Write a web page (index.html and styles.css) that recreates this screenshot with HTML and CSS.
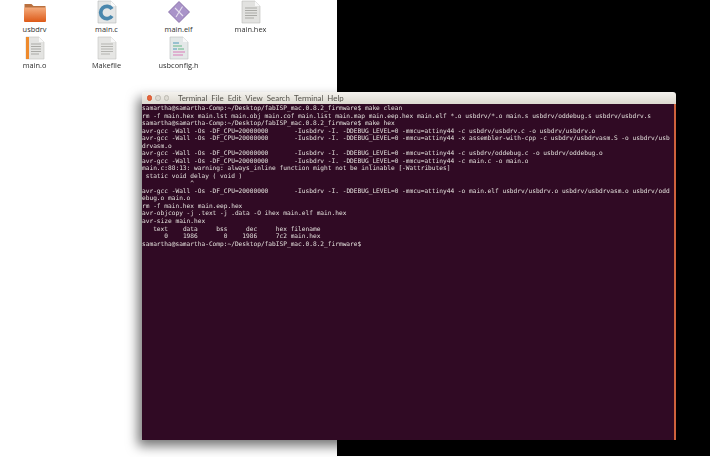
FILE: index.html
```html
<!DOCTYPE html>
<html lang="en">
<head>
<meta charset="utf-8">
<title>Terminal</title>
<link rel="stylesheet" href="styles.css">
</head>
<body>
<div class="desktop">
  <div class="files">
    <div class="file">
      <svg class="icon" viewBox="0 0 24 24"><defs><linearGradient id="fold" x1="0" y1="0" x2="0" y2="1"><stop offset="0" stop-color="#f4ab7c"/><stop offset="1" stop-color="#dd5a18"/></linearGradient></defs><path d="M1.500 4h7l2 2h12v3h-21z" fill="#b9703f"/><rect x="1" y="7.500" width="22" height="14.500" rx="1" fill="url(#fold)"/></svg>
      <span class="name">usbdrv</span>
    </div>
    <div class="file">
      <svg class="icon" viewBox="0 0 24 24"><path d="M3 1h13l5 5v17H3z" fill="#e4e6e6" stroke="#b5b9ba" stroke-width=".6"/><path d="M16 1v5h5z" fill="#fafafa"/><path d="M17 9A6.200 6.200 0 1 0 17 16" fill="none" stroke="#4a87ad" stroke-width="3.800"/></svg>
      <span class="name">main.c</span>
    </div>
    <div class="file">
      <svg class="icon" viewBox="0 0 24 24"><path d="M12 1.500L22.500 12 12 22.500 1.500 12z" fill="#a993c9" stroke="#7d659f" stroke-width=".8"/><path d="M15.500 6.500L9 17M8 8l8 8" stroke="#e6e0ee" stroke-width="1.100" fill="none"/></svg>
      <span class="name">main.elf</span>
    </div>
    <div class="file">
      <svg class="icon" viewBox="0 0 24 24"><path d="M3 1h13l5 5v17H3z" fill="#e2e2e0" stroke="#bcbcba" stroke-width=".6"/><path d="M16 1v5h5z" fill="#f8f8f8"/><path d="M6 8h12M6 10.500h12M6 13h12M6 15.500h12M6 18h9" stroke="#aaaaa6" stroke-width="1.100"/></svg>
      <span class="name">main.hex</span>
    </div>
    <div class="file">
      <svg class="icon" viewBox="0 0 24 24"><path d="M3 1h13l5 5v17H3z" fill="#e4e4e2" stroke="#c2c2c0" stroke-width=".6"/><rect x="3" y="1" width="3" height="22" fill="#ee8a2c"/><path d="M16 1v5h5z" fill="#f8f8f8"/><path d="M8 8h10M8 10.500h10M8 13h10M8 15.500h10M8 18h8" stroke="#aaaaa6" stroke-width="1.100"/></svg>
      <span class="name">main.o</span>
    </div>
    <div class="file">
      <svg class="icon" viewBox="0 0 24 24"><path d="M3 1h13l5 5v17H3z" fill="#e6e6e4" stroke="#c2c2c0" stroke-width=".6"/><path d="M16 1v5h5z" fill="#f8f8f8"/><path d="M6 8h12M6 10.500h12M6 13h12M6 15.500h12M6 18h9" stroke="#b4b4b0" stroke-width="1.100"/></svg>
      <span class="name">Makefile</span>
    </div>
    <div class="file">
      <svg class="icon" viewBox="0 0 24 24"><path d="M3 1h13l5 5v17H3z" fill="#e4e8e8" stroke="#b8bcbc" stroke-width=".6"/><path d="M16 1v5h5z" fill="#f8f8f8"/><path d="M6 7h6M6 13h4" stroke="#7fb2c8" stroke-width="1.300"/><path d="M6 10h9M11 13h6" stroke="#8fc6a8" stroke-width="1.300"/><path d="M6 16h12M6 19h10" stroke="#dd9ec8" stroke-width="1.300"/></svg>
      <span class="name">usbconfig.h</span>
    </div>
  </div>
  <div class="black"></div>
  <section class="window">
    <header class="titlebar">
      <div class="buttons">
        <span class="btn close"></span>
        <span class="btn min"></span>
        <span class="btn max"></span>
      </div>
      <nav class="menu">
        <span>Terminal</span><span>File</span><span>Edit</span><span>View</span><span>Search</span><span>Terminal</span><span>Help</span>
      </nav>
    </header>
    <pre class="term">samartha@samartha-Comp:~/Desktop/fabISP_mac.0.8.2_firmware$ make clean
rm -f main.hex main.lst main.obj main.cof main.list main.map main.eep.hex main.elf *.o usbdrv/*.o main.s usbdrv/oddebug.s usbdrv/usbdrv.s
samartha@samartha-Comp:~/Desktop/fabISP_mac.0.8.2_firmware$ make hex
avr-gcc -Wall -Os -DF_CPU=20000000	 -Iusbdrv -I. -DDEBUG_LEVEL=0 -mmcu=attiny44 -c usbdrv/usbdrv.c -o usbdrv/usbdrv.o
avr-gcc -Wall -Os -DF_CPU=20000000	 -Iusbdrv -I. -DDEBUG_LEVEL=0 -mmcu=attiny44 -x assembler-with-cpp -c usbdrv/usbdrvasm.S -o usbdrv/usb
drvasm.o
avr-gcc -Wall -Os -DF_CPU=20000000	 -Iusbdrv -I. -DDEBUG_LEVEL=0 -mmcu=attiny44 -c usbdrv/oddebug.c -o usbdrv/oddebug.o
avr-gcc -Wall -Os -DF_CPU=20000000	 -Iusbdrv -I. -DDEBUG_LEVEL=0 -mmcu=attiny44 -c main.c -o main.o
main.c:88:13: warning: always_inline function might not be inlinable [-Wattributes]
 static void delay ( void )
             ^
avr-gcc -Wall -Os -DF_CPU=20000000	 -Iusbdrv -I. -DDEBUG_LEVEL=0 -mmcu=attiny44 -o main.elf usbdrv/usbdrv.o usbdrv/usbdrvasm.o usbdrv/odd
ebug.o main.o
rm -f main.hex main.eep.hex
avr-objcopy -j .text -j .data -O ihex main.elf main.hex
avr-size main.hex
   text	   data	    bss	    dec	    hex	filename
      0	   1986	      0	   1986	    7c2	main.hex
samartha@samartha-Comp:~/Desktop/fabISP_mac.0.8.2_firmware$</pre>
  </section>
</div>
</body>
</html>
```

FILE: styles.css
```css
html, body {
  margin: 0;
  padding: 0;
  background: #fff;
}
.desktop {
  position: relative;
  width: 710px;
  height: 457px;
  overflow: hidden;
  display: flex;
  font-family: "Open Sans", "Liberation Sans", sans-serif;
}
.files {
  width: 337px;
  height: 456px;
  display: grid;
  grid-template-columns: repeat(4, 72px);
  grid-auto-rows: 36px;
  justify-content: start;
  background: #fff;
  filter: blur(.35px);
}
.file {
  margin-left: -3px;
  display: flex;
  flex-direction: column;
  align-items: center;
  gap: 1px;
}
.icon {
  width: 24px;
  height: 24px;
  flex: none;
}
.name {
  font-size: 7.4px;
  line-height: 9px;
  color: #2f2f2f;
}
.black {
  flex: 1;
  height: 456px;
  background: #000;
}
.window {
  position: absolute;
  left: 142px;
  top: 92px;
  width: 534px;
  height: 348px;
  display: flex;
  flex-direction: column;
  box-shadow: -4px 6px 12px rgba(0, 0, 0, .55);
  box-sizing: border-box;
  border-radius: 3px 3px 0 0;
}
.titlebar {
  height: 12px;
  flex: none;
  display: flex;
  align-items: center;
  background: linear-gradient(#f4f2ee, #dcd9d0);
  border-radius: 3px 3px 0 0;
}
.buttons {
  display: flex;
  gap: 3px;
  width: 36px;
  padding-left: 4.5px;
  box-sizing: border-box;
  flex: none;
}
.btn {
  width: 5.5px;
  height: 5.5px;
  border-radius: 50%;
  background: #dedbd3;
  border: 1px solid #bdbab2;
  box-sizing: border-box;
}
.btn.close {
  background: #e8653a;
  border-color: #d5542c;
}
.menu {
  display: flex;
  gap: 4px;
  font-size: 7.9px;
  line-height: 12px;
  color: #55534c;
  white-space: nowrap;
  font-family: "Lato", sans-serif;
  filter: blur(.25px);
}
.term {
  flex: 1;
  margin: 0;
  padding: 0;
  background: #300a24;
  border-right: 2px solid #cf623c;
  color: #e2dfdb;
  font-family: "DejaVu Sans Mono", monospace;
  font-size: 6.18px;
  line-height: 7.53px;
  tab-size: 8;
  white-space: pre;
  overflow: hidden;
  filter: blur(.3px);
}
```
